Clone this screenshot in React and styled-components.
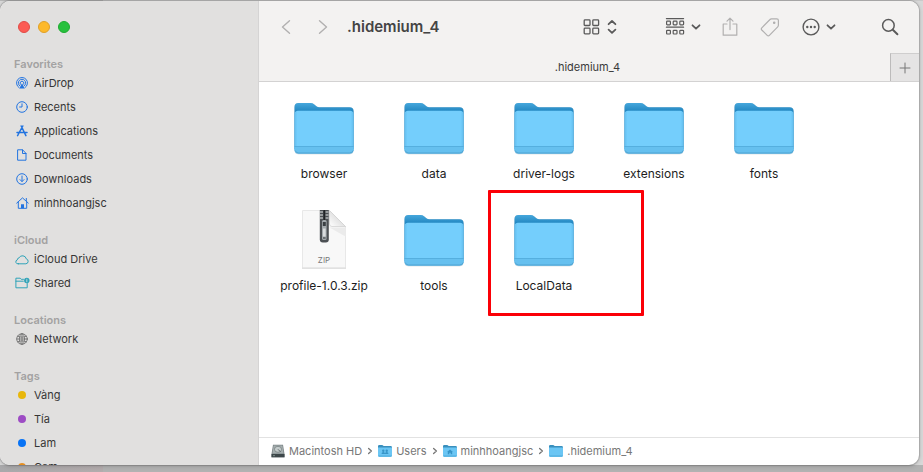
import React from "react";
import styled, { createGlobalStyle } from "styled-components";

const GlobalStyle = createGlobalStyle`
  *, *::before, *::after { box-sizing: border-box; }
  body {
    margin: 0;
    font-family: Inter, "Liberation Sans", sans-serif;
    font-size: 11px;
    color: #262626;
    background: #b2b2b2;
  }
`;

const Desktop = styled.div`
  height: 100vh;
  display: flex;
  padding: 1px 4px 7px 0;
  overflow: hidden;
  background:
    linear-gradient(#b6b6b6, #b6b6b6) 0 0 / 103px 1px no-repeat,
    linear-gradient(#cacaca, #cacaca) 0 0 / 100% 1px no-repeat,
    linear-gradient(90deg, #a9a9ab, #b3acad) 0 100% / 103px 7px no-repeat,
    linear-gradient(#b2b2b2, #b2b2b2) 0 100% / 100% 7px no-repeat,
    #d8d8d8;
`;

const Window = styled.div`
  flex: 1;
  min-width: 0;
  display: flex;
  overflow: hidden;
  border-radius: 10px;
  background: #fff;
  box-shadow: 0 0 1px 1px rgba(0, 0, 0, 0.16), 0 1px 5px rgba(0, 0, 0, 0.18);
`;

const Sidebar = styled.aside`
  flex: 0 0 259px;
  overflow: hidden;
  background: #e1e0df;
  border-right: 1px solid #d5d4d4;
`;

const WindowControls = styled.div`
  display: flex;
  gap: 8px;
  padding: 20px 18px 24px;
`;

const ControlDot = styled.button`
  width: 12px;
  height: 12px;
  padding: 0;
  border-radius: 50%;
  border: 1px solid ${(p) => p.$edge};
  background: ${(p) => p.$color};
`;

const Group = styled.nav`
  margin-bottom: 18px;
`;

const GroupTitle = styled.h2`
  margin: 0;
  padding-left: 14px;
  font-size: 11px;
  line-height: 14px;
  font-weight: 600;
  color: #a3a2a2;
`;

const List = styled.ul`
  list-style: none;
  margin: 0;
  padding: 0;
`;

const SideLink = styled.a`
  display: flex;
  align-items: center;
  gap: 4px;
  height: 24px;
  padding-left: 14px;
  color: #363636;
  text-decoration: none;
`;

const SideIcon = styled.span`
  display: flex;
  justify-content: center;
  width: 16px;
  color: ${(p) => p.$color};
`;

const TagDot = styled.span`
  width: 8px;
  height: 8px;
  border-radius: 50%;
  background: currentColor;
`;

const Main = styled.main`
  flex: 1;
  min-width: 0;
  display: flex;
  flex-direction: column;
`;

const Toolbar = styled.header`
  display: flex;
  align-items: center;
  height: 52px;
  padding: 0 21px 0 19px;
  background: #f3f2f1;
`;

const ToolGroup = styled.div`
  display: flex;
  align-items: center;
  gap: ${(p) => p.$gap}px;
`;

const ToolButton = styled.button`
  display: flex;
  align-items: center;
  justify-content: ${(p) => (p.$width ? "space-between" : "center")};
  width: ${(p) => p.$width || 16}px;
  height: 24px;
  padding: 0;
  border: 0;
  background: none;
  color: ${(p) => (p.$dim ? "#b1b0b0" : "#5a5a5a")};
  svg { flex: none; }
`;

const Title = styled.h1`
  flex: 1;
  margin: 0 0 0 16px;
  font-size: 15px;
  line-height: 20px;
  font-weight: 600;
  color: #444;
`;

const TabBar = styled.div`
  display: flex;
  height: 29px;
  background: #f3f2f1;
  border-bottom: 1px solid #d3d2d2;
`;

const Tab = styled.button`
  flex: 1;
  padding: 0 0 0 26px;
  border: 0;
  background: none;
  font: inherit;
  color: #3a3a3a;
`;

const AddTab = styled.button`
  display: flex;
  align-items: center;
  justify-content: center;
  width: 29px;
  padding: 0;
  border: 0;
  border-left: 1px solid #bcbbbb;
  border-top: 1px solid #cfcece;
  background: #e5e4e4;
  color: #777;
`;

const Files = styled.section`
  flex: 1;
  min-height: 0;
  display: grid;
  grid-template-columns: repeat(auto-fill, 110px);
  grid-auto-rows: 86px;
  row-gap: 26px;
  align-content: start;
  padding: 14px 80px 0 10px;
`;

const FileItem = styled.div`
  position: relative;
  display: flex;
  flex-direction: column;
  align-items: center;
  gap: 6px;
  font-size: 12px;
  line-height: 16px;
  color: #1d1d1d;
`;

const Highlight = styled.span`
  position: absolute;
  left: -1px;
  top: -18px;
  width: 156px;
  height: 126px;
  border: 3px solid #fb0007;
  border-radius: 1px;
`;

const PathBar = styled.footer`
  display: flex;
  align-items: center;
  gap: 4px;
  height: 28px;
  padding: 0 12px 2px;
  border-top: 1px solid #e2e2e2;
  color: #777;
`;

const PathLink = styled.a`
  display: flex;
  align-items: center;
  gap: 4px;
  color: inherit;
  text-decoration: none;
`;

const Line = ({ w = 12, h = w, box, sw = 1, children }) => (
  <svg width={w} height={h} viewBox={box || `0 0 ${w} ${h}`} fill="none" stroke="currentColor"
    strokeWidth={sw} strokeLinecap="round" strokeLinejoin="round" aria-hidden="true">
    {children}
  </svg>
);

const AirDropIcon = () => (
  <Line w={12}>
    <path d="M3.1 10.7a5.5 5.5 0 1 1 5.8 0" />
    <path d="M3.7 8.9a3.7 3.7 0 1 1 4.6 0" />
    <path d="M4.6 7.4a1.9 1.9 0 1 1 2.8 0" />
    <path d="M6 6.2 8.6 11.5H3.4z" fill="currentColor" stroke="none" />
  </Line>
);
const ClockIcon = () => (
  <Line w={12}>
    <circle cx="6" cy="6" r="5.3" />
    <path d="M6 2.8V6H3.6" />
  </Line>
);
const AppsIcon = () => (
  <Line w={12} sw={1.5}>
    <path d="M5.2 1 9.9 10.6M6.8 1 2.2 9.4M1 7.6h10M1.6 10.7l.4-.7" />
  </Line>
);
const DocumentIcon = () => (
  <Line w={10} h={12}>
    <path d="M1 .8h4.6L9 4.4v6.8H1zM5.5.9v3.6H9" />
  </Line>
);
const DownloadIcon = () => (
  <Line w={12}>
    <circle cx="6" cy="6" r="5.3" />
    <path d="M6 3v5.400M4 6.600l2 2 2-2" />
  </Line>
);
const HomeIcon = () => (
  <Line w={13} h={12}>
    <path d="M.7 6.1 6.5.9l5.8 5.2M2.3 5v6.3h8.4V5M10.3 1.4v2.2" />
    <path d="M5 7.2h3v4.1H5z" fill="currentColor" stroke="none" />
  </Line>
);
const CloudIcon = () => (
  <Line w={14} h={11}>
    <path d="M3.4 9.8h7.5a2.5 2.5 0 0 0 .4-4.9A3.9 3.9 0 0 0 4 3.9a2 2 0 0 0-1.7 2A2 2 0 0 0 3.4 9.8z" />
  </Line>
);
const SharedIcon = () => (
  <Line w={15} h={12}>
    <path d="M8.5 2.3H6.2L5.2 1.2H.9v9.6h11.3V6.5M.9 4.2h7.4" />
    <circle cx="11.8" cy="3.5" r="2.7" fill="currentColor" stroke="none" />
    <path d="M11.8 2.2v.3M11.8 3.4v1.4" stroke="#e1e0df" strokeWidth="0.8" />
  </Line>
);
const NetworkIcon = () => (
  <Line w={12} sw={0.9}>
    <circle cx="6" cy="6" r="5.3" />
    <ellipse cx="6" cy="6" rx="2.6" ry="5.3" />
    <path d="M6 .7v10.6M.7 6h10.6M1.6 3.2c2.8 1.3 6 1.3 8.8 0M1.6 8.8c2.8-1.3 6-1.3 8.8 0" />
  </Line>
);

const BackIcon = () => <Line w={10} h={16} sw={1.4}><path d="M8.5 1.8 1.5 8l7 6.2" /></Line>;
const ForwardIcon = () => <Line w={10} h={16} sw={1.4}><path d="M1.5 1.8l7 6.2-7 6.2" /></Line>;
const GridIcon = () => (
  <Line w={17} h={16} sw={1.3}>
    <rect x="1.2" y=".9" width="5.8" height="5.6" rx=".8" />
    <rect x="9.8" y=".9" width="5.8" height="5.6" rx=".8" />
    <rect x="1.2" y="9.2" width="5.8" height="5.6" rx=".8" />
    <rect x="9.8" y="9.2" width="5.8" height="5.6" rx=".8" />
  </Line>
);
const UpDownIcon = () => <Line w={10} h={16} sw={1.8}><path d="M1.6 5.2 5 2l3.4 3.2M1.6 10.6 5 13.8l3.400-3.200" /></Line>;
const DownIcon = () => <Line w={10} h={8} sw={1.8}><path d="M1.5 2.3 5 5.7l3.5-3.4" /></Line>;
const ArrangeIcon = () => (
  <Line w={20} h={20} sw={1.2}>
    <path d="M1.4 1.6h17.2M1.4 10.200h17.200" />
    {[1.6, 8.2, 14.8].map((x) => (
      <g key={x}>
        <rect x={x} y="4.2" width="3.8" height="3.6" rx=".7" />
        <rect x={x} y="13.4" width="3.8" height="3.6" rx=".7" />
      </g>
    ))}
  </Line>
);
const ShareIcon = () => (
  <Line w={16} h={20} sw={1.2}>
    <path d="M5 7H1.2v11.2h13.6V7H11M8 12.600V1.400M5 4.200l3-3 3 3" />
  </Line>
);
const TagIcon = () => (
  <Line w={20} h={20} sw={1.2}>
    <path d="M11.4 1.8h5.4q1.6 0 1.6 1.6v4.8q0 .9-.7 1.6l-8.3 8.5q-1.1 1.1-2.2 0L1.8 13q-1-1.1 0-2.2l8.2-8.3q.6-.7 1.4-.7z" />
    <circle cx="14.2" cy="5.8" r=".7" fill="currentColor" />
  </Line>
);
const MoreIcon = () => (
  <Line w={18} sw={1.4}>
    <circle cx="9" cy="9" r="7.9" />
    <g fill="currentColor" stroke="none">
      <circle cx="5.3" cy="9" r="1.2" /><circle cx="9" cy="9" r="1.2" /><circle cx="12.7" cy="9" r="1.2" />
    </g>
  </Line>
);
const SearchIcon = () => (
  <Line w={18} sw={1.5}>
    <circle cx="7.4" cy="7.4" r="5.8" />
    <path d="M11.8 11.8l4.6 4.4" strokeWidth="2" />
  </Line>
);
const PlusIcon = () => <Line w={12}><path d="M6 1v10M1 6h10" /></Line>;
const SeparatorIcon = () => <Line w={8} h={8} sw={1.3}><path d="M2.600 1.400 5.400 4 2.600 6.600" /></Line>;

const FolderIcon = () => (
  <svg width="64" height="64" viewBox="0 0 64 64" aria-hidden="true">
    <defs>
      <linearGradient id="folderBack" x1="0" y1="0" x2="0" y2="1">
        <stop offset="0" stopColor="#46a7dc" />
        <stop offset="0.18" stopColor="#2287c1" />
        <stop offset="1" stopColor="#2287c1" />
      </linearGradient>
      <linearGradient id="folderFront" x1="0" y1="0" x2="1" y2="0">
        <stop offset="0" stopColor="#62bdee" />
        <stop offset="0.05" stopColor="#74cefc" />
        <stop offset="0.95" stopColor="#74cefc" />
        <stop offset="1" stopColor="#62bdee" />
      </linearGradient>
    </defs>
    <path d="M2.5 54V11q0-4 4-4h12q2 0 3.5 1.3l2.4 2q1.2 1 3 1h30q4.2 0 4.2 4V54q0 4.2-4.2 4.2H6.700q-4.200 0-4.200-4.200z" fill="#9bacb7" opacity=".6" />
    <path d="M2.5 53V11q0-4 4-4h12q2 0 3.500 1.300l2.400 2q1.200 1 3 1h30q4.200 0 4.200 4V53z" fill="url(#folderBack)" />
    <path d="M2.5 18.200q0-3.500 3.500-3.500h52q3.600 0 3.600 3.500v35q0 4.200-4.200 4.200H6.700q-4.200 0-4.200-4.200z" fill="url(#folderFront)" />
    <path d="M2.5 50.500h59.100v2.700q0 4.200-4.200 4.200H6.700q-4.200 0-4.200-4.200z" fill="#66c0ef" />
    <path d="M2.5 50.500h59.100" stroke="#4fa8d9" strokeWidth=".8" />
    <path d="M3.300 54.500q.6 2.500 3.400 2.500h50.700q3 0 3.700-2.500" fill="none" stroke="#4a9dcb" strokeWidth=".8" />
  </svg>
);

const ZipIcon = () => (
  <svg width="64" height="64" viewBox="0 0 64 64" role="img" aria-label="ZIP archive">
    <defs>
      <linearGradient id="zipFold" x1="0" y1="1" x2="1" y2="0">
        <stop offset="0" stopColor="#fff" />
        <stop offset="0.5" stopColor="#e3e3e3" />
        <stop offset="0.52" stopColor="#f8f8f8" />
      </linearGradient>
    </defs>
    <path d="M10 3h28l16 16v41.500H10z" fill="#c4c4c4" />
    <path d="M10.500 2.500H37.500L53.500 18.500V59.500H10.500z" fill="#f8f8f8" stroke="#e8e8e8" />
    <path d="M37.500 19.500h16v9z" fill="#ebebeb" />
    <path d="M37.500 2.500L53.500 18.500H40q-2.500 0-2.500-2.500z" fill="url(#zipFold)" stroke="#cecece" strokeWidth=".7" />
    <path d="M27.800 2h9v29.500q0 3-3 3h-3q-3 0-3-3z" fill="#4c5054" />
    <path d="M28 4h3M33.500 4h3M28 7h3M33.500 7h3M28 10h3M33.500 10h3" stroke="#b3b6b8" strokeWidth="1.3" />
    <path d="M32.300 2v11" stroke="#202326" strokeWidth="1.6" />
    <rect x="30" y="12" width="4.6" height="20" rx="1.5" fill="#a4aaae" />
    <path d="M30.800 14h3v4h-3z" fill="#3b4044" />
    <path d="M31 20.500h2.600v8H31z" fill="#d9dcde" />
    <path d="M31 30h2.600" stroke="#34383b" />
    <text x="32" y="55" textAnchor="middle" fontFamily="Inter, sans-serif" fontSize="8" fill="#777">ZIP</text>
  </svg>
);

const SmallFolderIcon = ({ children }) => (
  <svg width="14" height="14" viewBox="0 0 14 14" aria-hidden="true">
    <path d="M0 11V2.300Q0 1 1.300 1h3l1.400 1h6.900Q14 2 14 3.400V11z" fill="#398fbd" />
    <path d="M0 3.600h14v8q0 1.300-1.300 1.300H1.300Q0 12.900 0 11.600z" fill="#6bc6f4" />
    <path d="M.4 12h13.200" stroke="#4ba5d3" strokeWidth=".8" />
    {children}
  </svg>
);
const DiskIcon = () => (
  <svg width="14" height="14" viewBox="0 0 14 14" aria-hidden="true">
    <path d="M2 .8h10L13.500 10v3.300H.5V10z" fill="#7b8486" />
    <path d="M2.600 1.500h8.800l1.200 8H1.400z" fill="#a6afb0" />
    <ellipse cx="7" cy="5.3" rx="3.6" ry="3" fill="#c3cbcb" stroke="#6e7779" strokeWidth=".7" />
    <path d="M7 5.300l2.500 2.500" stroke="#5f686a" />
    <path d="M.5 10h13v3.300H.5z" fill="#3d474a" />
    <path d="M2 11.700h2" stroke="#91a19d" strokeWidth=".8" />
  </svg>
);
const UsersFolderIcon = () => (
  <SmallFolderIcon>
    <g fill="#3795c8"><circle cx="5.3" cy="6.8" r="1.2" /><circle cx="8.7" cy="6.8" r="1.2" /><path d="M3.500 10q0-2 1.800-2T7 9.500Q7 8 8.700 8t1.800 2z" /></g>
  </SmallFolderIcon>
);
const HomeFolderIcon = () => (
  <SmallFolderIcon><path d="M7 5.500l3 2.500h-.8v2.200H7.700V8.700H6.300v1.500H4.800V8H4z" fill="#3795c8" /></SmallFolderIcon>
);

const BLUE = "#2374e0";
const TEAL = "#2fa3b8";
const groups = [
  { title: "Favorites", color: BLUE, items: [
    ["AirDrop", AirDropIcon], ["Recents", ClockIcon], ["Applications", AppsIcon],
    ["Documents", DocumentIcon], ["Downloads", DownloadIcon], ["minhhoangjsc", HomeIcon],
  ] },
  { title: "iCloud", color: TEAL, items: [["iCloud Drive", CloudIcon], ["Shared", SharedIcon]] },
  { title: "Locations", color: "#737373", items: [["Network", NetworkIcon]] },
  { title: "Tags", items: [
    ["Vàng", TagDot, "#e8b70c"], ["Tía", TagDot, "#9d4cc4"], ["Lam", TagDot, "#0873f5"], ["Cam", TagDot, "#e58e20"],
  ] },
];

const files = [
  ["browser", FolderIcon], ["data", FolderIcon], ["driver-logs", FolderIcon], ["extensions", FolderIcon],
  ["fonts", FolderIcon], ["profile-1.0.3.zip", ZipIcon], ["tools", FolderIcon], ["LocalData", FolderIcon, true],
];

const path = [
  ["Macintosh HD", DiskIcon], ["Users", UsersFolderIcon], ["minhhoangjsc", HomeFolderIcon], [".hidemium_4", SmallFolderIcon],
];

export default function App() {
  return (
    <>
      <GlobalStyle />
      <Desktop>
        <Window>
          <Sidebar>
            <WindowControls>
              <ControlDot aria-label="Close" $color="#fc5b54" $edge="#e04c47" />
              <ControlDot aria-label="Minimize" $color="#fdb92b" $edge="#e0a028" />
              <ControlDot aria-label="Zoom" $color="#27c13d" $edge="#1eab31" />
            </WindowControls>
            {groups.map((group) => (
              <Group key={group.title} aria-label={group.title}>
                <GroupTitle>{group.title}</GroupTitle>
                <List>
                  {group.items.map(([name, Icon, color]) => (
                    <li key={name}>
                      <SideLink href="#">
                        <SideIcon $color={color || group.color}><Icon /></SideIcon>
                        {name}
                      </SideLink>
                    </li>
                  ))}
                </List>
              </Group>
            ))}
          </Sidebar>
          <Main>
            <Toolbar>
              <ToolGroup $gap={21}>
                <ToolButton $dim aria-label="Back"><BackIcon /></ToolButton>
                <ToolButton $dim aria-label="Forward"><ForwardIcon /></ToolButton>
              </ToolGroup>
              <Title>.hidemium_4</Title>
              <ToolGroup $gap={48}>
                <ToolButton $width={34} aria-label="View"><GridIcon /><UpDownIcon /></ToolButton>
                <ToolGroup $gap={46}>
                  <ToolGroup $gap={21}>
                    <ToolButton $width={36} aria-label="Group"><ArrangeIcon /><DownIcon /></ToolButton>
                    <ToolGroup $gap={24}>
                      <ToolButton $dim aria-label="Share"><ShareIcon /></ToolButton>
                      <ToolButton $dim aria-label="Edit tags"><TagIcon /></ToolButton>
                      <ToolButton $width={34} aria-label="More"><MoreIcon /><DownIcon /></ToolButton>
                    </ToolGroup>
                  </ToolGroup>
                  <ToolButton aria-label="Search"><SearchIcon /></ToolButton>
                </ToolGroup>
              </ToolGroup>
            </Toolbar>
            <TabBar>
              <Tab>.hidemium_4</Tab>
              <AddTab aria-label="New tab"><PlusIcon /></AddTab>
            </TabBar>
            <Files aria-label="Files">
              {files.map(([name, Icon, marked]) => (
                <FileItem key={name}>
                  <Icon />
                  <span>{name}</span>
                  {marked && <Highlight />}
                </FileItem>
              ))}
            </Files>
            <PathBar>
              {path.map(([name, Icon], i) => (
                <React.Fragment key={name}>
                  {i > 0 && <SeparatorIcon />}
                  <PathLink href="#"><Icon />{name}</PathLink>
                </React.Fragment>
              ))}
            </PathBar>
          </Main>
        </Window>
      </Desktop>
    </>
  );
}
